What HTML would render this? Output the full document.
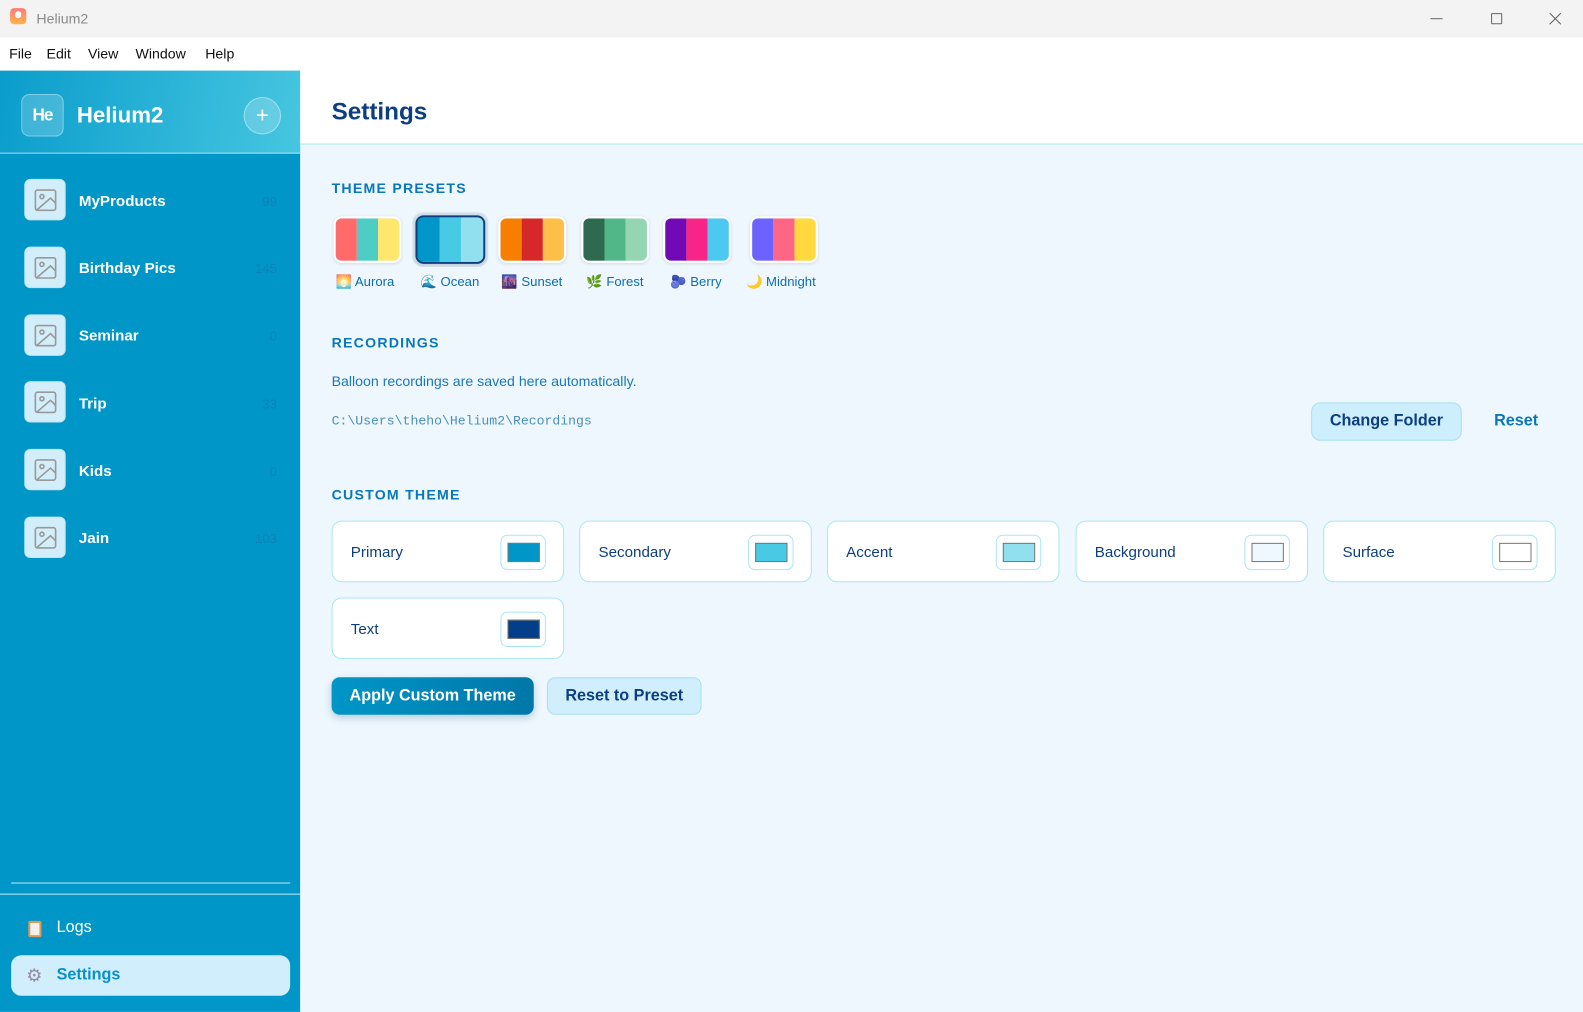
<!DOCTYPE html>
<html><head><meta charset="utf-8"><style>
*{box-sizing:border-box;margin:0;padding:0}
html,body{width:1583px;height:1012px;overflow:hidden;background:#eef7fe}
#w{position:absolute;left:0;top:0;width:1566px;height:1001px;transform:scale(1.0109);transform-origin:0 0;font-family:"Liberation Sans",sans-serif}
.a{position:absolute}
.tb{left:0;top:0;width:1566px;height:37px;background:#f3f3f3}
.mb{left:0;top:37px;width:1566px;height:33px;background:#fff;font-size:14px;color:#111}
.mb span{position:absolute;top:8px}
.sb{left:0;top:70px;width:297px;height:931px;background:#0096c7}
.sh{left:0;top:70px;width:297px;height:82px;background:linear-gradient(100deg,#0a9dcc,#46c6e0);border-bottom:1px solid rgba(200,240,250,.8)}
.it{left:24px;width:41px;height:41px;border-radius:6px;background:#d3eefb;border:1px solid #bfe4f4}
.it svg{position:absolute;left:8px;top:8px}
.nm{left:78px;font-size:15px;font-weight:bold;color:#fff}
.ct{font-size:13px;color:#0b82b8;text-align:right}
.main{left:297px;top:70px;width:1269px;height:931px;background:#eef7fe}
.mh{left:297px;top:70px;width:1269px;height:73px;background:#fff;border-bottom:1px solid #a8e6f0}
.h2{left:328px;font-size:14px;font-weight:bold;letter-spacing:1.2px;color:#0a78b8}
.sw{top:214px;width:67px;height:46px;border-radius:8px;overflow:hidden;display:flex;border:2px solid #fff;box-shadow:0 1px 3px rgba(0,0,0,.12)}
.sw div{flex:1}
.lb{top:271px;font-size:13px;color:#0a6fb0}
.card{width:230px;height:61px;background:#fff;border:1px solid #a8e6f5;border-radius:10px}
.card span{position:absolute;left:18px;top:22px;font-size:15px;color:#0d3f80}
.card i{position:absolute;left:166px;top:13px;width:45px;height:35px;border:1px solid #a8e6f5;border-radius:7px}
.card b{position:absolute;left:6px;top:7px;width:32px;height:19px;border:1px solid #777}
</style></head><body><div id="w">
<div class="a tb"></div>
<div class="a" style="left:10px;top:8px;width:16px;height:16px;border-radius:4px;background:linear-gradient(#ff7a7a,#ffb347)"><div class="a" style="left:5px;top:3px;width:6px;height:7px;border-radius:3px;background:#fff"></div></div>
<div class="a" style="left:36px;top:10px;font-size:14px;color:#8a8a8a">Helium2</div>
<div class="a" style="left:1415px;top:18px;width:12px;height:1px;background:#666"></div>
<div class="a" style="left:1475px;top:13px;width:11px;height:11px;border:1px solid #666;border-radius:1px"></div>
<svg class="a" style="left:1532px;top:12px" width="13" height="13"><path d="M1 1L12 12M12 1L1 12" stroke="#666" stroke-width="1.1"/></svg>
<div class="a mb"><span style="left:9px">File</span><span style="left:46px">Edit</span><span style="left:87px">View</span><span style="left:134px">Window</span><span style="left:203px">Help</span></div>
<div class="a sb"></div>
<div class="a sh"></div>
<div class="a" style="left:21px;top:93px;width:42px;height:42px;border-radius:8px;background:rgba(255,255,255,.2);border:1px solid rgba(255,255,255,.35);color:#fff;font-weight:bold;font-size:17px;text-align:center;line-height:40px;letter-spacing:-1px">He</div>
<div class="a" style="left:76px;top:101px;font-size:22px;font-weight:bold;color:#fff">Helium2</div>
<div class="a" style="left:241px;top:96px;width:37px;height:37px;border-radius:50%;background:rgba(255,255,255,.2);border:1px solid rgba(255,255,255,.4);color:#fff;font-size:22px;text-align:center;line-height:33px">+</div>
<div class="a it" style="top:177px"><svg width="24" height="24" viewBox="0 0 24 24"><rect x="2" y="2" width="20" height="20" rx="2" fill="none" stroke="#999" stroke-width="1.6"/><circle cx="8.5" cy="8.5" r="2" fill="none" stroke="#999" stroke-width="1.6"/><path d="M22 15l-5-5L3 22" fill="none" stroke="#999" stroke-width="1.6"/></svg></div><div class="a nm" style="top:191px">MyProducts</div><div class="a ct" style="top:192px;left:230px;width:44px">99</div>
<div class="a it" style="top:244px"><svg width="24" height="24" viewBox="0 0 24 24"><rect x="2" y="2" width="20" height="20" rx="2" fill="none" stroke="#999" stroke-width="1.6"/><circle cx="8.5" cy="8.5" r="2" fill="none" stroke="#999" stroke-width="1.6"/><path d="M22 15l-5-5L3 22" fill="none" stroke="#999" stroke-width="1.6"/></svg></div><div class="a nm" style="top:257px">Birthday Pics</div><div class="a ct" style="top:258px;left:230px;width:44px">145</div>
<div class="a it" style="top:311px"><svg width="24" height="24" viewBox="0 0 24 24"><rect x="2" y="2" width="20" height="20" rx="2" fill="none" stroke="#999" stroke-width="1.6"/><circle cx="8.5" cy="8.5" r="2" fill="none" stroke="#999" stroke-width="1.6"/><path d="M22 15l-5-5L3 22" fill="none" stroke="#999" stroke-width="1.6"/></svg></div><div class="a nm" style="top:324px">Seminar</div><div class="a ct" style="top:325px;left:230px;width:44px">0</div>
<div class="a it" style="top:377px"><svg width="24" height="24" viewBox="0 0 24 24"><rect x="2" y="2" width="20" height="20" rx="2" fill="none" stroke="#999" stroke-width="1.6"/><circle cx="8.5" cy="8.5" r="2" fill="none" stroke="#999" stroke-width="1.6"/><path d="M22 15l-5-5L3 22" fill="none" stroke="#999" stroke-width="1.6"/></svg></div><div class="a nm" style="top:391px">Trip</div><div class="a ct" style="top:392px;left:230px;width:44px">33</div>
<div class="a it" style="top:444px"><svg width="24" height="24" viewBox="0 0 24 24"><rect x="2" y="2" width="20" height="20" rx="2" fill="none" stroke="#999" stroke-width="1.6"/><circle cx="8.5" cy="8.5" r="2" fill="none" stroke="#999" stroke-width="1.6"/><path d="M22 15l-5-5L3 22" fill="none" stroke="#999" stroke-width="1.6"/></svg></div><div class="a nm" style="top:458px">Kids</div><div class="a ct" style="top:459px;left:230px;width:44px">0</div>
<div class="a it" style="top:511px"><svg width="24" height="24" viewBox="0 0 24 24"><rect x="2" y="2" width="20" height="20" rx="2" fill="none" stroke="#999" stroke-width="1.6"/><circle cx="8.5" cy="8.5" r="2" fill="none" stroke="#999" stroke-width="1.6"/><path d="M22 15l-5-5L3 22" fill="none" stroke="#999" stroke-width="1.6"/></svg></div><div class="a nm" style="top:524px">Jain</div><div class="a ct" style="top:525px;left:230px;width:44px">103</div>
<div class="a" style="left:11px;top:873px;width:276px;height:1px;background:#bfeaf5"></div>
<div class="a" style="left:0;top:884px;width:297px;height:1px;background:#bfeaf5"></div>
<div class="a" style="left:28px;top:911px;width:13px;height:16px;background:#f0f0f0;border:2px solid #e09a50;border-radius:2px"></div>
<div class="a" style="left:56px;top:909px;font-size:16px;color:#fff">Logs</div>
<div class="a" style="left:11px;top:945px;width:276px;height:40px;border-radius:10px;background:#d0eefc"></div>
<div class="a" style="left:26px;top:956px;font-size:18px;color:#9a8aa0;line-height:18px">⚙</div>
<div class="a" style="left:56px;top:956px;font-size:16px;font-weight:bold;color:#0a90c8">Settings</div>
<div class="a main"></div>
<div class="a mh"></div>
<div class="a" style="left:328px;top:97px;font-size:24px;font-weight:bold;color:#0d3f80">Settings</div>
<div class="a h2" style="top:178px">THEME PRESETS</div>
<div class="a sw" style="left:330px"><div style="background:#ff6b6b"></div><div style="background:#4ecdc4"></div><div style="background:#ffe66d"></div></div>
<div class="a" style="left:408px;top:210px;width:75px;height:54px;border-radius:10px;background:#d6e2ea"></div>
<div class="a sw" style="left:411px;border:2px solid #0d3f80;width:69px;height:48px;top:213px"><div style="background:#0096c7"></div><div style="background:#48cae4"></div><div style="background:#90e0ef"></div></div>
<div class="a sw" style="left:493px"><div style="background:#f77f00"></div><div style="background:#d62828"></div><div style="background:#fcbf49"></div></div>
<div class="a sw" style="left:575px"><div style="background:#2d6a4f"></div><div style="background:#52b788"></div><div style="background:#95d5b2"></div></div>
<div class="a sw" style="left:656px"><div style="background:#7209b7"></div><div style="background:#f72585"></div><div style="background:#4cc9f0"></div></div>
<div class="a sw" style="left:742px"><div style="background:#6c63ff"></div><div style="background:#ff6584"></div><div style="background:#ffd93d"></div></div>
<div class="a lb" style="left:332px">🌅 Aurora</div>
<div class="a lb" style="left:416px">🌊 Ocean</div>
<div class="a lb" style="left:496px">🌆 Sunset</div>
<div class="a lb" style="left:580px">🌿 Forest</div>
<div class="a lb" style="left:663px">🫐 Berry</div>
<div class="a lb" style="left:738px">🌙 Midnight</div>
<div class="a h2" style="top:331px">RECORDINGS</div>
<div class="a" style="left:328px;top:369px;font-size:14px;color:#1a78b8">Balloon recordings are saved here automatically.</div>
<div class="a" style="left:328px;top:409px;font-size:13px;color:#4a90b8;font-family:'Liberation Mono',monospace">C:\Users\theho\Helium2\Recordings</div>
<div class="a" style="left:1297px;top:398px;width:149px;height:38px;border-radius:9px;background:#cdeefc;border:1px solid #a8e0f0;color:#0d3f80;font-weight:bold;font-size:16px;text-align:center;line-height:36px">Change Folder</div>
<div class="a" style="left:1478px;top:408px;font-size:16px;font-weight:bold;color:#0a78b8">Reset</div>
<div class="a h2" style="top:481px">CUSTOM THEME</div>
<div class="a card" style="left:328px;top:515px"><span>Primary</span><i><b style="background:#0096c7"></b></i></div>
<div class="a card" style="left:573px;top:515px"><span>Secondary</span><i><b style="background:#48cae4"></b></i></div>
<div class="a card" style="left:818px;top:515px"><span>Accent</span><i><b style="background:#90e0ef"></b></i></div>
<div class="a card" style="left:1064px;top:515px"><span>Background</span><i><b style="background:#f0f8ff"></b></i></div>
<div class="a card" style="left:1309px;top:515px"><span>Surface</span><i><b style="background:#fff"></b></i></div>
<div class="a card" style="left:328px;top:591px"><span>Text</span><i><b style="background:#023e8a"></b></i></div>
<div class="a" style="left:328px;top:670px;width:200px;height:37px;border-radius:8px;background:linear-gradient(90deg,#0096c7,#0077a8);color:#fff;font-weight:bold;font-size:16px;text-align:center;line-height:37px;box-shadow:0 3px 8px rgba(0,80,120,.25)">Apply Custom Theme</div>
<div class="a" style="left:541px;top:670px;width:153px;height:37px;border-radius:8px;background:#d0eefc;border:1px solid #a8e0f0;color:#0d3f80;font-weight:bold;font-size:16px;text-align:center;line-height:35px">Reset to Preset</div>
</div></body></html>
